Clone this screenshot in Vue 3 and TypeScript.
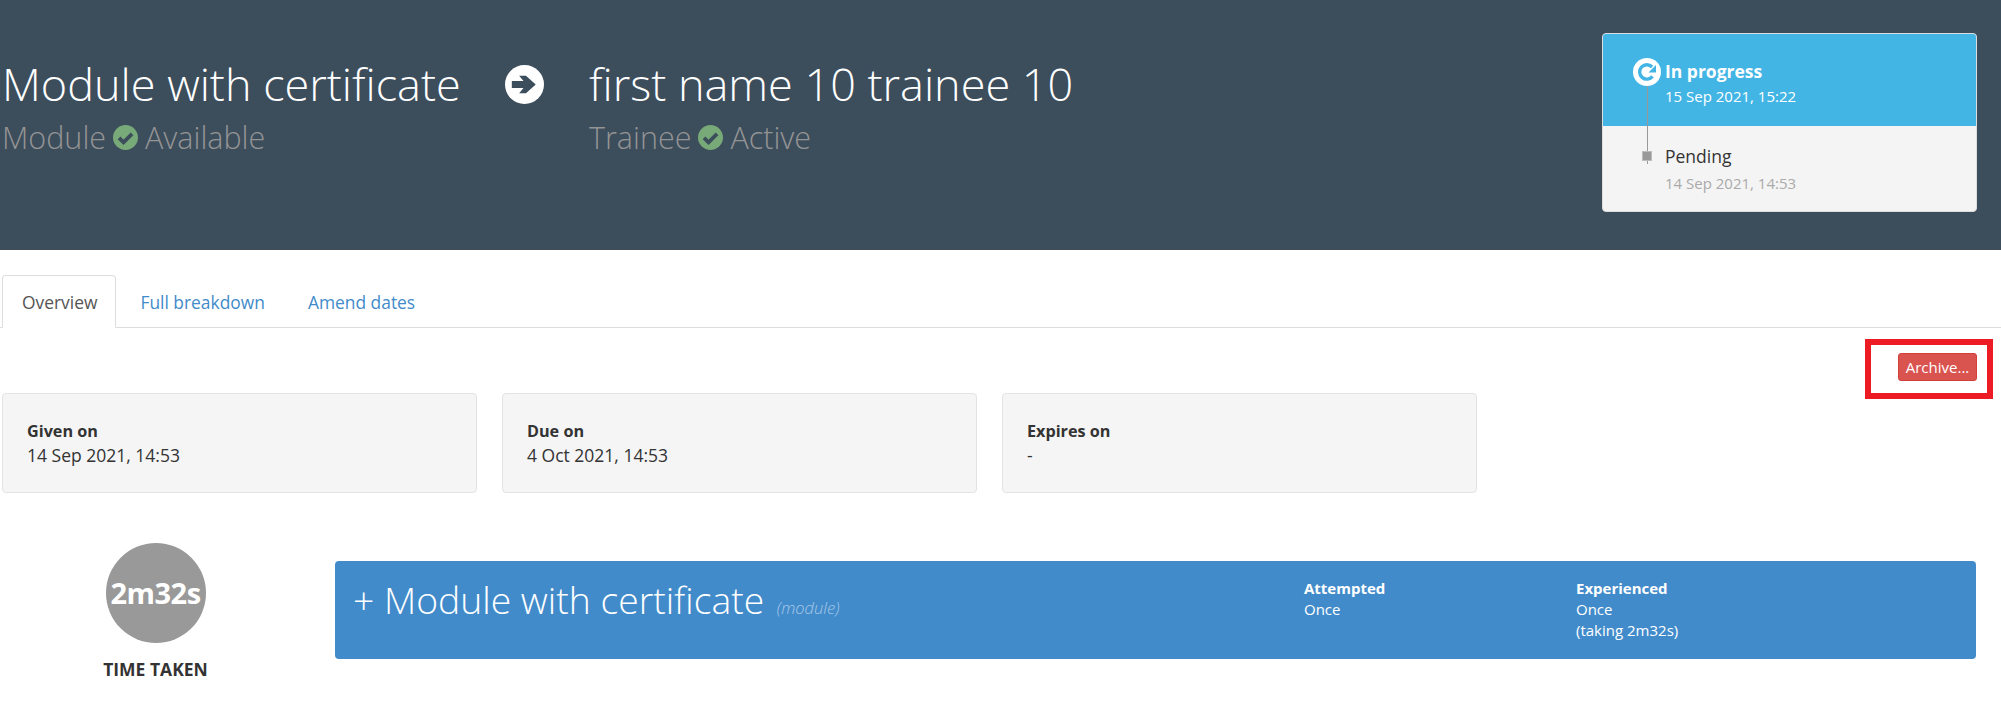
<script setup lang="ts">
const dates = [
  { label: 'Given on', value: '14 Sep 2021, 14:53' },
  { label: 'Due on', value: '4 Oct 2021, 14:53' },
  { label: 'Expires on', value: '-' },
];
</script>

<template>
  <div class="page">
    <header class="hero">
      <div class="hero__side hero__side--module">
        <h1 class="hero__title">Module with certificate</h1>
        <div class="hero__sub">
          Module
          <svg class="hero__check" viewBox="0 0 24 24" aria-hidden="true">
            <circle cx="12" cy="12" r="12" fill="#78a978" />
            <path d="M5.8 12.4l4.3 4.3 8.2-8.2" fill="none" stroke="#3c4d5c" stroke-width="3.6" />
          </svg>
          Available
        </div>
      </div>
      <svg class="hero__arrow" viewBox="0 0 40 40" aria-hidden="true">
        <circle cx="20" cy="20" r="20" fill="#fff" />
        <path d="M7 16.5h12l-4.5-5.5h7l10 9-10 9h-7l4.5-5.5H7z" fill="#3c4d5c" />
      </svg>
      <div class="hero__side">
        <h1 class="hero__title">first name 10 trainee 10</h1>
        <div class="hero__sub">
          Trainee
          <svg class="hero__check" viewBox="0 0 24 24" aria-hidden="true">
            <circle cx="12" cy="12" r="12" fill="#78a978" />
            <path d="M5.8 12.4l4.3 4.3 8.2-8.2" fill="none" stroke="#3c4d5c" stroke-width="3.6" />
          </svg>
          Active
        </div>
      </div>
      <div class="status">
        <div class="status__line"></div>
        <div class="status__row status__row--current">
          <span class="status__marker">
            <svg viewBox="0 0 28 28" aria-hidden="true">
              <circle cx="14" cy="14" r="14" fill="#fff" />
              <path d="M19.5 18.4a7.2 7.2 0 1 1-.4-9.4" fill="none" stroke="#43b5e5" stroke-width="3.4" />
              <path d="M23 7v7.5h-7.5z" fill="#43b5e5" />
            </svg>
          </span>
          <div class="status__text">
            <div class="status__name">In progress</div>
            <div class="status__date">15 Sep 2021, 15:22</div>
          </div>
        </div>
        <div class="status__row">
          <span class="status__marker"><i class="status__dot"></i></span>
          <div class="status__text">
            <div class="status__name">Pending</div>
            <div class="status__date">14 Sep 2021, 14:53</div>
          </div>
        </div>
      </div>
    </header>

    <nav class="tabs">
      <a class="tabs__item tabs__item--active">Overview</a>
      <a class="tabs__item">Full breakdown</a>
      <a class="tabs__item">Amend dates</a>
    </nav>

    <div class="actions">
      <button type="button" class="actions__archive">Archive...</button>
      <div class="actions__highlight"></div>
    </div>

    <section class="dates">
      <div v-for="d in dates" :key="d.label" class="dates__card">
        <strong>{{ d.label }}</strong>
        <div>{{ d.value }}</div>
      </div>
    </section>

    <section class="summary">
      <div class="time">
        <div class="time__circle">2m32s</div>
        <div class="time__label">TIME TAKEN</div>
      </div>
      <div class="panel">
        <div class="panel__title">
          + Module with certificate <em>(module)</em>
        </div>
        <div class="panel__stat panel__stat--attempted">
          <strong>Attempted</strong>
          <div>Once</div>
        </div>
        <div class="panel__stat">
          <strong>Experienced</strong>
          <div>Once</div>
          <div>(taking 2m32s)</div>
        </div>
      </div>
    </section>
  </div>
</template>

<style>
html,
body {
  margin: 0;
  background: #fff;
}
</style>

<style scoped>
.page {
  height: 724px;
  overflow: hidden;
  font-family: 'Open Sans', 'Liberation Sans', sans-serif;
  font-size: 17.5px;
  line-height: 1.43;
  color: #333;
}

.hero {
  display: flex;
  box-sizing: border-box;
  height: 250px;
  padding: 33px 24px 0 2px;
  background: #3c4d5c;
}

.hero__side {
  padding-top: 22px;
}

.hero__side--module {
  width: 503px;
}

.hero__title {
  margin: 0;
  color: #fff;
  font-size: 45px;
  font-weight: 300;
  line-height: 58px;
  white-space: nowrap;
}

.hero__sub {
  display: flex;
  align-items: center;
  gap: 7px;
  margin-top: 4px;
  color: #949494;
  font-size: 30.5px;
  font-weight: 300;
  line-height: 40px;
}

.hero__check {
  width: 25px;
  height: 25px;
}

.hero__arrow {
  flex-shrink: 0;
  width: 39px;
  height: 39px;
  margin: 32px 45px 0 0;
}

.status {
  position: relative;
  box-sizing: border-box;
  width: 375px;
  height: 179px;
  margin-left: auto;
  overflow: hidden;
  border: 1px solid #ddd;
  border-radius: 4px;
  background: #f4f4f4;
}

.status__line {
  position: absolute;
  z-index: 1;
  top: 50px;
  left: 44px;
  width: 1px;
  height: 80px;
  background: #999;
}

.status__row {
  display: flex;
  box-sizing: border-box;
  height: 85px;
  padding: 18px 0 0 30px;
  color: #333;
}

.status__row--current {
  height: 92px;
  padding-top: 24px;
  background: #43b5e5;
  color: #fff;
}

.status__marker {
  position: relative;
  z-index: 2;
  display: flex;
  flex-shrink: 0;
  justify-content: center;
  width: 28px;
  height: 28px;
  margin-right: 4px;
}

.status__marker svg {
  width: 28px;
  height: 28px;
}

.status__dot {
  width: 8px;
  height: 8px;
  margin-top: 8px;
  background: #999;
  outline: 1px solid #bbb;
}

.status__name {
  font-size: 17.5px;
  line-height: 24px;
}

.status__row--current .status__text {
  margin-top: 1px;
}

.status__row--current .status__name {
  font-weight: 700;
}

.status__date {
  margin-top: 3px;
  color: #aaa;
  font-size: 15px;
  line-height: 24px;
}

.status__row--current .status__date {
  margin-top: 1px;
  color: #fff;
}

.tabs {
  display: flex;
  gap: 4px;
  box-sizing: border-box;
  height: 78px;
  padding: 25px 0 0 2px;
  border-bottom: 1px solid #ddd;
}

.tabs__item {
  box-sizing: border-box;
  height: 53px;
  padding: 14px 18px 0 19px;
  border: 1px solid transparent;
  border-radius: 4px 4px 0 0;
  color: #428bca;
  font-size: 17.4px;
  line-height: 24px;
}

.tabs__item--active {
  border-color: #ddd;
  border-bottom-color: #fff;
  background: #fff;
  color: #555;
}

.actions {
  position: relative;
  display: flex;
  justify-content: flex-end;
  padding: 25px 24px 0 0;
}

.actions__archive {
  box-sizing: border-box;
  width: 79px;
  height: 28px;
  padding: 0;
  border: 1px solid #d43f3a;
  border-radius: 3px;
  background: #d9534f;
  color: #fff;
  font: inherit;
  font-size: 15px;
  line-height: 1;
}

.actions__highlight {
  position: absolute;
  top: 11px;
  right: 8px;
  box-sizing: border-box;
  width: 128px;
  height: 60px;
  border: 6px solid #ed1c24;
}

.dates {
  display: flex;
  gap: 25px;
  margin: 12px 0 0 2px;
}

.dates__card {
  box-sizing: border-box;
  width: 475px;
  height: 100px;
  padding: 24px 24px 0;
  border: 1px solid #e3e3e3;
  border-radius: 4px;
  background: #f5f5f5;
  line-height: 24px;
}

.dates__card strong {
  font-size: 16.2px;
}

.summary {
  display: flex;
  margin-top: 50px;
}

.time {
  width: 311px;
  text-align: center;
}

.time__circle {
  width: 100px;
  height: 100px;
  margin: 0 auto;
  border-radius: 50%;
  background: #999;
  color: #fff;
  font-size: 29px;
  font-weight: 700;
  letter-spacing: -.5px;
  line-height: 100px;
}

.time__label {
  margin-top: 14px;
  font-size: 17.5px;
  font-weight: 700;
  line-height: 24px;
}

.panel {
  display: flex;
  box-sizing: border-box;
  width: 1641px;
  height: 98px;
  margin: 18px 0 0 24px;
  padding: 17px 0 0 18px;
  border-radius: 4px;
  background: #428bca;
  color: #fff;
  font-size: 15px;
  line-height: 21px;
}

.panel__title {
  width: 951px;
  margin-top: -3px;
  font-size: 37.3px;
  font-weight: 300;
  line-height: 50px;
  white-space: nowrap;
}

.panel__title em {
  margin-left: 3px;
  color: #a6c8e8;
  font-size: 16.5px;
}

.panel__stat--attempted {
  width: 272px;
}
</style>
